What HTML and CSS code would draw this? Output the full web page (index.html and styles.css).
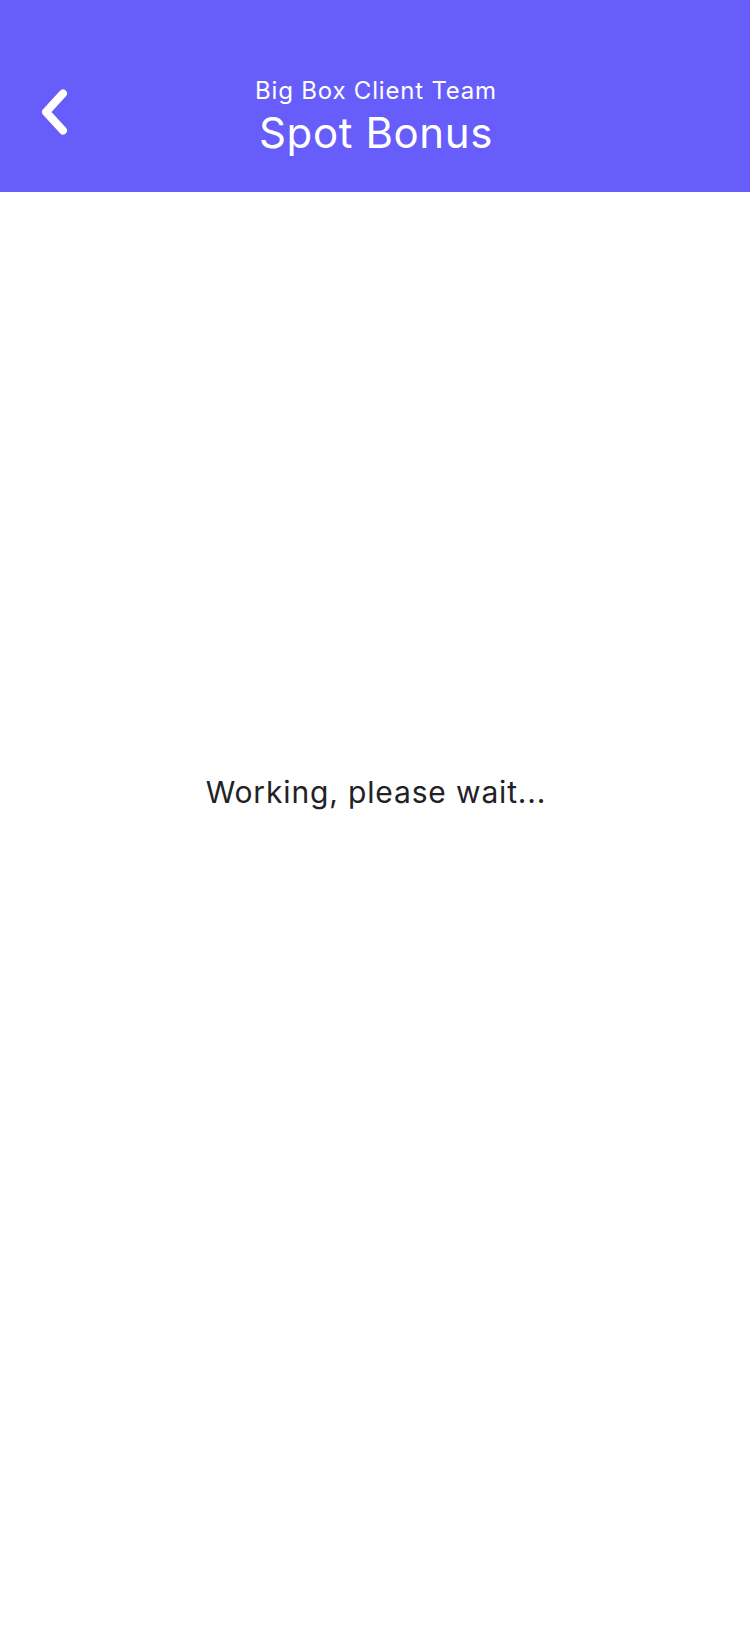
FILE: index.html
```html
<!DOCTYPE html>
<html lang="en">
<head>
<meta charset="utf-8">
<title>Spot Bonus</title>
<link rel="stylesheet" href="styles.css">
</head>
<body>
<header class="topbar">
  <button class="back" aria-label="Back">
    <svg width="40" height="56" viewBox="0 0 40 56" aria-hidden="true">
      <polyline points="23,5.5 6,24 23,42.5" fill="none" stroke="#ffffff" stroke-width="8" stroke-linecap="round" stroke-linejoin="round"/>
    </svg>
  </button>
  <div class="titles">
    <div class="subtitle">Big Box Client Team</div>
    <div class="title">Spot Bonus</div>
  </div>
</header>
<main class="content">
  <p class="status">Working, please wait...</p>
</main>
</body>
</html>
```

FILE: styles.css
```css
html, body {
  margin: 0;
  padding: 0;
  background: #ffffff;
}
body {
  width: 750px;
  min-height: 1632px;
  font-family: Inter, "Noto Sans", sans-serif;
}
.topbar {
  position: relative;
  height: 192px;
  background: #665dfb;
  box-sizing: border-box;
  padding-top: 77px;
}
.back {
  position: absolute;
  left: 40px;
  top: 88px;
  padding: 0;
  margin: 0;
  border: 0;
  background: none;
  width: 40px;
  height: 56px;
}
.back svg {
  display: block;
}
.titles {
  display: flex;
  flex-direction: column;
  align-items: center;
  color: #ffffff;
  padding-left: 2px;
}
.subtitle {
  font-size: 24px;
  line-height: 28px;
  height: 31px;
  letter-spacing: 0.8px;
}
.title {
  font-size: 42px;
  line-height: 50px;
  letter-spacing: 0.6px;
}
.content {
  padding-top: 582px;
  display: flex;
  justify-content: center;
}
.status {
  margin: 0;
  font-size: 30px;
  line-height: 36px;
  letter-spacing: 0.85px;
  color: #222226;
  padding-left: 2px;
}
```
